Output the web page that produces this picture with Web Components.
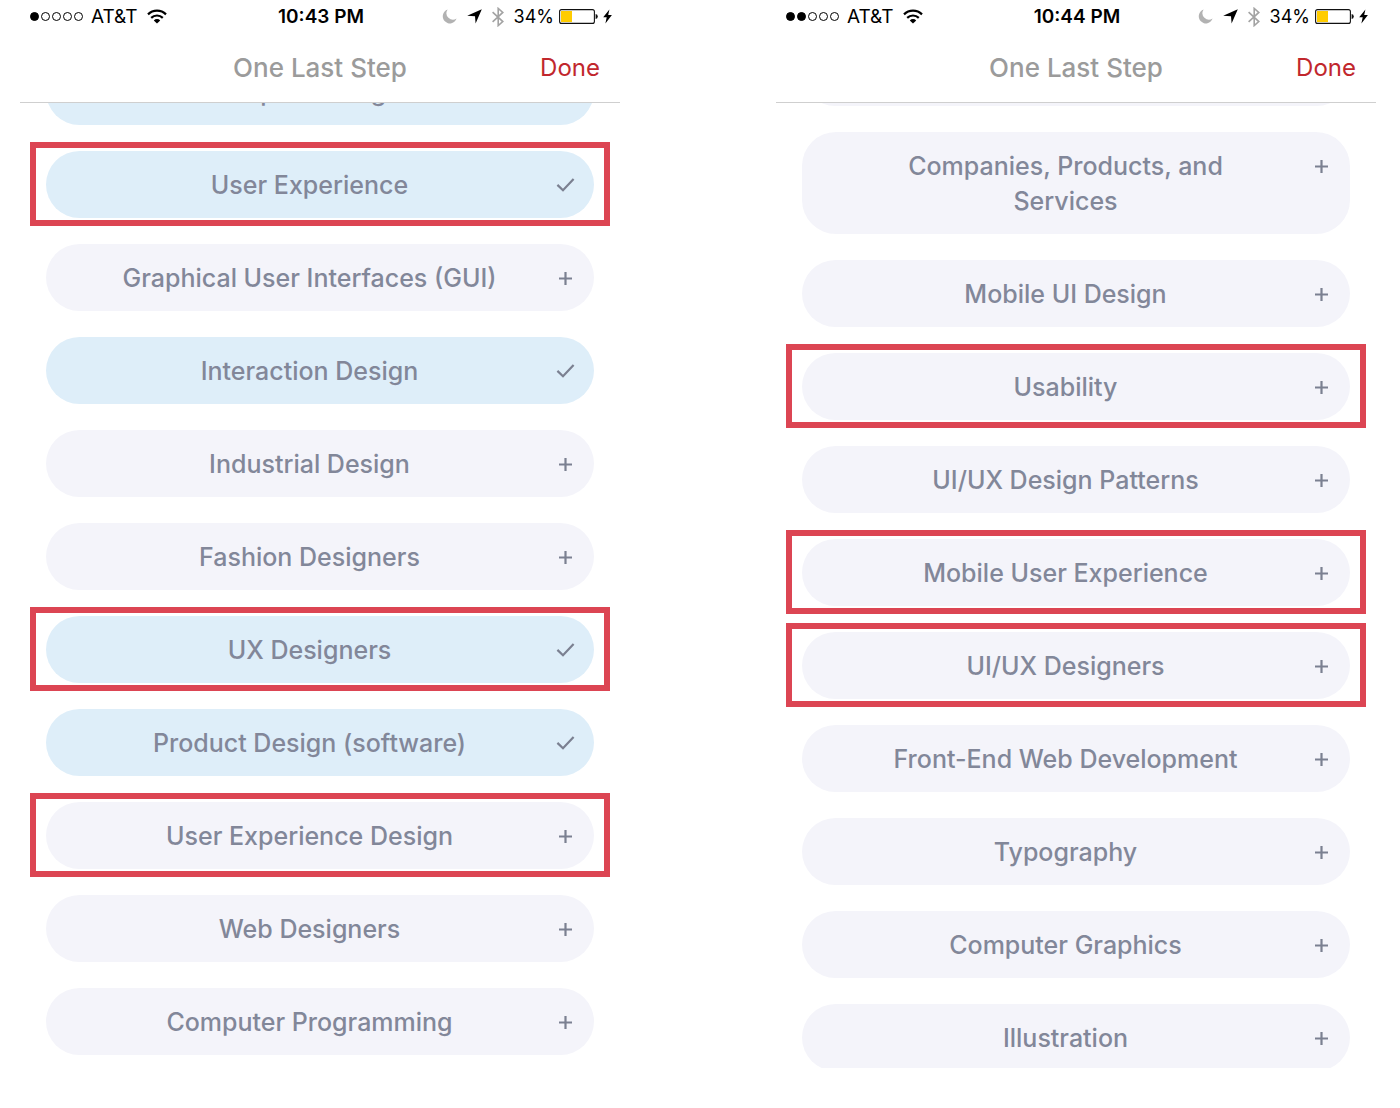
<!DOCTYPE html>
<html lang="en">
<head>
<meta charset="utf-8">
<meta name="viewport" content="width=device-width, initial-scale=1">
<title>One Last Step</title>
<style>
    body {
        margin: 0;
        background: #fff;
        font-family: Inter, "Liberation Sans", sans-serif;
    }
</style>
</head>
<body>

<screen-pair>
    <phone-screen time="10:43 PM" signal="1" scroll="45">
        <topic-pill selected>Graphic Design</topic-pill>
        <topic-pill selected marked>User Experience</topic-pill>
        <topic-pill>Graphical User Interfaces (GUI)</topic-pill>
        <topic-pill selected>Interaction Design</topic-pill>
        <topic-pill>Industrial Design</topic-pill>
        <topic-pill>Fashion Designers</topic-pill>
        <topic-pill selected marked>UX Designers</topic-pill>
        <topic-pill selected>Product Design (software)</topic-pill>
        <topic-pill marked>User Experience Design</topic-pill>
        <topic-pill>Web Designers</topic-pill>
        <topic-pill>Computer Programming</topic-pill>
    </phone-screen>

    <phone-screen time="10:44 PM" signal="2" scroll="64">
        <topic-pill></topic-pill>
        <topic-pill>Companies, Products, and Services</topic-pill>
        <topic-pill>Mobile UI Design</topic-pill>
        <topic-pill marked>Usability</topic-pill>
        <topic-pill>UI/UX Design Patterns</topic-pill>
        <topic-pill marked>Mobile User Experience</topic-pill>
        <topic-pill marked>UI/UX Designers</topic-pill>
        <topic-pill>Front-End Web Development</topic-pill>
        <topic-pill>Typography</topic-pill>
        <topic-pill>Computer Graphics</topic-pill>
        <topic-pill>Illustration</topic-pill>
    </phone-screen>
</screen-pair>

<script>
class ScreenPair extends HTMLElement {
    constructor() {
        super();
        this.attachShadow({ mode: "open" });
    }

    connectedCallback() {
        this.shadowRoot.innerHTML = `
            <style>
                :host {
                    display: grid;
                    grid-template-columns: 1fr 1fr;
                    grid-template-rows: minmax(0, 1fr);
                    column-gap: 156px;
                    box-sizing: border-box;
                    height: 100vh;
                    padding: 0 24px 40px 20px;
                }
            </style>
            <slot></slot>
        `;
    }
}

class StatusBar extends HTMLElement {
    constructor() {
        super();
        this.attachShadow({ mode: "open" });
    }

    getDots() {
        const signal = Number(this.getAttribute('signal'));
        let dots = '';
        for (let i = 0; i < 5; i++) {
            dots += `<i class="${i < signal ? 'on' : ''}"></i>`;
        }
        return dots;
    }

    connectedCallback() {
        this.shadowRoot.innerHTML = `
            <style>
                :host {
                    display: grid;
                    grid-template-columns: 1fr auto 1fr;
                    align-items: center;
                    height: 33px;
                    padding: 0 8px 0 10px;
                    font-size: 19px;
                    line-height: 33px;
                    color: #000;
                }

                div {
                    display: flex;
                    align-items: center;
                }

                .right {
                    justify-content: flex-end;
                    font-size: 18px;
                }

                .dots {
                    gap: 2px;
                    margin-right: 8px;
                }

                i {
                    box-sizing: border-box;
                    width: 9px;
                    height: 9px;
                    border: 1px solid #000;
                    border-radius: 50%;
                }

                .on {
                    background: #000;
                }

                time {
                    font-weight: 600;
                }

                svg {
                    display: block;
                    flex: none;
                }

                .wifi {
                    margin-left: 9px;
                }

                .moon, .arrow, .bluetooth {
                    margin-right: 10px;
                }

                .battery {
                    margin: 0 5px;
                }
            </style>

            <div>
                <div class="dots">${this.getDots()}</div>
                <span>AT&amp;T</span>
                <svg class="wifi" width="20" height="15" viewBox="0 0 20 15" fill="none" stroke="#000" stroke-width="2.2">
                    <path d="M1 5.4A12.8 12.8 0 0 1 19 5.4"/>
                    <path d="M4.2 8.9A8.2 8.2 0 0 1 15.8 8.9"/>
                    <path d="M10 14.6L6.8 11.4A4.6 4.6 0 0 1 13.2 11.4Z" fill="#000" stroke="none"/>
                </svg>
            </div>

            <time>${this.getAttribute('time')}</time>

            <div class="right">
                <svg class="moon" width="15" height="15" viewBox="0 0 15 15">
                    <path d="M5.6 .6A7.1 7.1 0 1 0 14.6 9.6A6.5 6.5 0 0 1 5.6 .6Z" fill="#b2b2b2"/>
                </svg>
                <svg class="arrow" width="15" height="15" viewBox="0 0 15 15">
                    <path d="M14.8 .2L8.6 14.6L8 7.2L.2 6.7Z" fill="#000"/>
                </svg>
                <svg class="bluetooth" width="12" height="20" viewBox="0 0 12 20" fill="none" stroke="#a3a3a3" stroke-width="1.6">
                    <path d="M.6 5.2L10.8 14.6L6.2 18.6V1.4L10.8 5.4L.6 14.8"/>
                </svg>
                <span>34%</span>
                <svg class="battery" width="39" height="15" viewBox="0 0 39 15">
                    <rect x=".6" y=".6" width="34.8" height="13.8" rx="2" fill="none" stroke="#111" stroke-width="1.1"/>
                    <rect x="2" y="2" width="11" height="11" fill="#ffcc00"/>
                    <path d="M36.6 5Q38.8 5.4 38.8 7.5Q38.8 9.6 36.6 10Z" fill="#111"/>
                </svg>
                <svg width="9" height="15" viewBox="0 0 9 15">
                    <path d="M6.4 .4L.2 8.2H3.7L2.4 14.4L8.9 6.1H5.2Z" fill="#000"/>
                </svg>
            </div>
        `;
    }
}

class PhoneScreen extends HTMLElement {
    constructor() {
        super();
        this.attachShadow({ mode: "open" });
    }

    connectedCallback() {
        this.shadowRoot.innerHTML = `
            <style>
                :host {
                    display: flex;
                    flex-direction: column;
                    min-width: 0;
                }

                header {
                    display: grid;
                    grid-template-columns: 1fr auto 1fr;
                    align-items: center;
                    height: 69px;
                    padding: 0 20px;
                    border-bottom: 1px solid #cfcfcf;
                }

                h1 {
                    grid-column: 2;
                    margin: 0;
                    font-size: 26px;
                    font-weight: 500;
                    line-height: 35px;
                    color: #9b9b9b;
                }

                button {
                    justify-self: end;
                    padding: 0;
                    border: 0;
                    background: none;
                    font: inherit;
                    font-size: 24px;
                    line-height: 35px;
                    color: #c1272d;
                }

                main {
                    display: flex;
                    flex: 1;
                    flex-direction: column;
                    gap: 26px;
                    min-height: 0;
                    box-sizing: border-box;
                    padding: 0 26px 14px;
                    overflow-y: auto;
                    scrollbar-width: none;
                }
            </style>

            <status-bar time="${this.getAttribute('time')}" signal="${this.getAttribute('signal')}"></status-bar>
            <header>
                <h1>One Last Step</h1>
                <button type="button">Done</button>
            </header>
            <main><slot></slot></main>
        `;

        // wait until the screen has been laid out before scrolling it
        queueMicrotask(() => {
            this.shadowRoot.querySelector('main').scrollTop = Number(this.getAttribute('scroll'));
        });
    }
}

class TopicPill extends HTMLElement {
    constructor() {
        super();
        this.attachShadow({ mode: "open" });
    }

    static get observedAttributes() {
        return ['selected'];
    }

    attributeChangedCallback() {
        if (this.isConnected) {
            this.render();
        }
    }

    connectedCallback() {
        this.render();
    }

    getIcon() {
        if (this.hasAttribute('selected')) {
            return '<path d="M2.4 9.4L8 14.8L18.6 3.6"/>';
        }
        return '<path d="M10.5 3.5V16.5M4 10H17"/>';
    }

    render() {
        const selected = this.hasAttribute('selected');

        this.shadowRoot.innerHTML = `
            <style>
                :host {
                    display: block;
                    flex: none;
                    position: relative;
                }

                button {
                    display: flex;
                    align-items: flex-start;
                    gap: 40px;
                    box-sizing: border-box;
                    width: 100%;
                    min-height: 67px;
                    padding: 17px 19px 15px 58px;
                    border: 0;
                    border-radius: 34px;
                    background: #f4f4fa;
                    font: inherit;
                    font-size: 25px;
                    font-weight: 500;
                    line-height: 35px;
                    color: #828799;
                }

                :host([selected]) button {
                    background: #deeef9;
                }

                span {
                    flex: 1;
                    text-align: center;
                }

                svg {
                    flex: none;
                    width: 20px;
                    height: 35px;
                }

                /* red frame drawn around the topics being pointed out */
                :host([marked])::after {
                    content: "";
                    position: absolute;
                    inset: -9px -16px -8px;
                    border: 6px solid #dc4553;
                    pointer-events: none;
                }
            </style>

            <button type="button" aria-pressed="${selected}">
                <span><slot></slot></span>
                <svg viewBox="0 0 20 20" fill="none" stroke="#7b8091" stroke-width="2.2">${this.getIcon()}</svg>
            </button>
        `;

        this.shadowRoot.querySelector('button').addEventListener('click', () => {
            this.toggleAttribute('selected');
        });
    }
}

customElements.define('topic-pill', TopicPill);
customElements.define('status-bar', StatusBar);
customElements.define('phone-screen', PhoneScreen);
customElements.define('screen-pair', ScreenPair);
</script>
</body>
</html>
